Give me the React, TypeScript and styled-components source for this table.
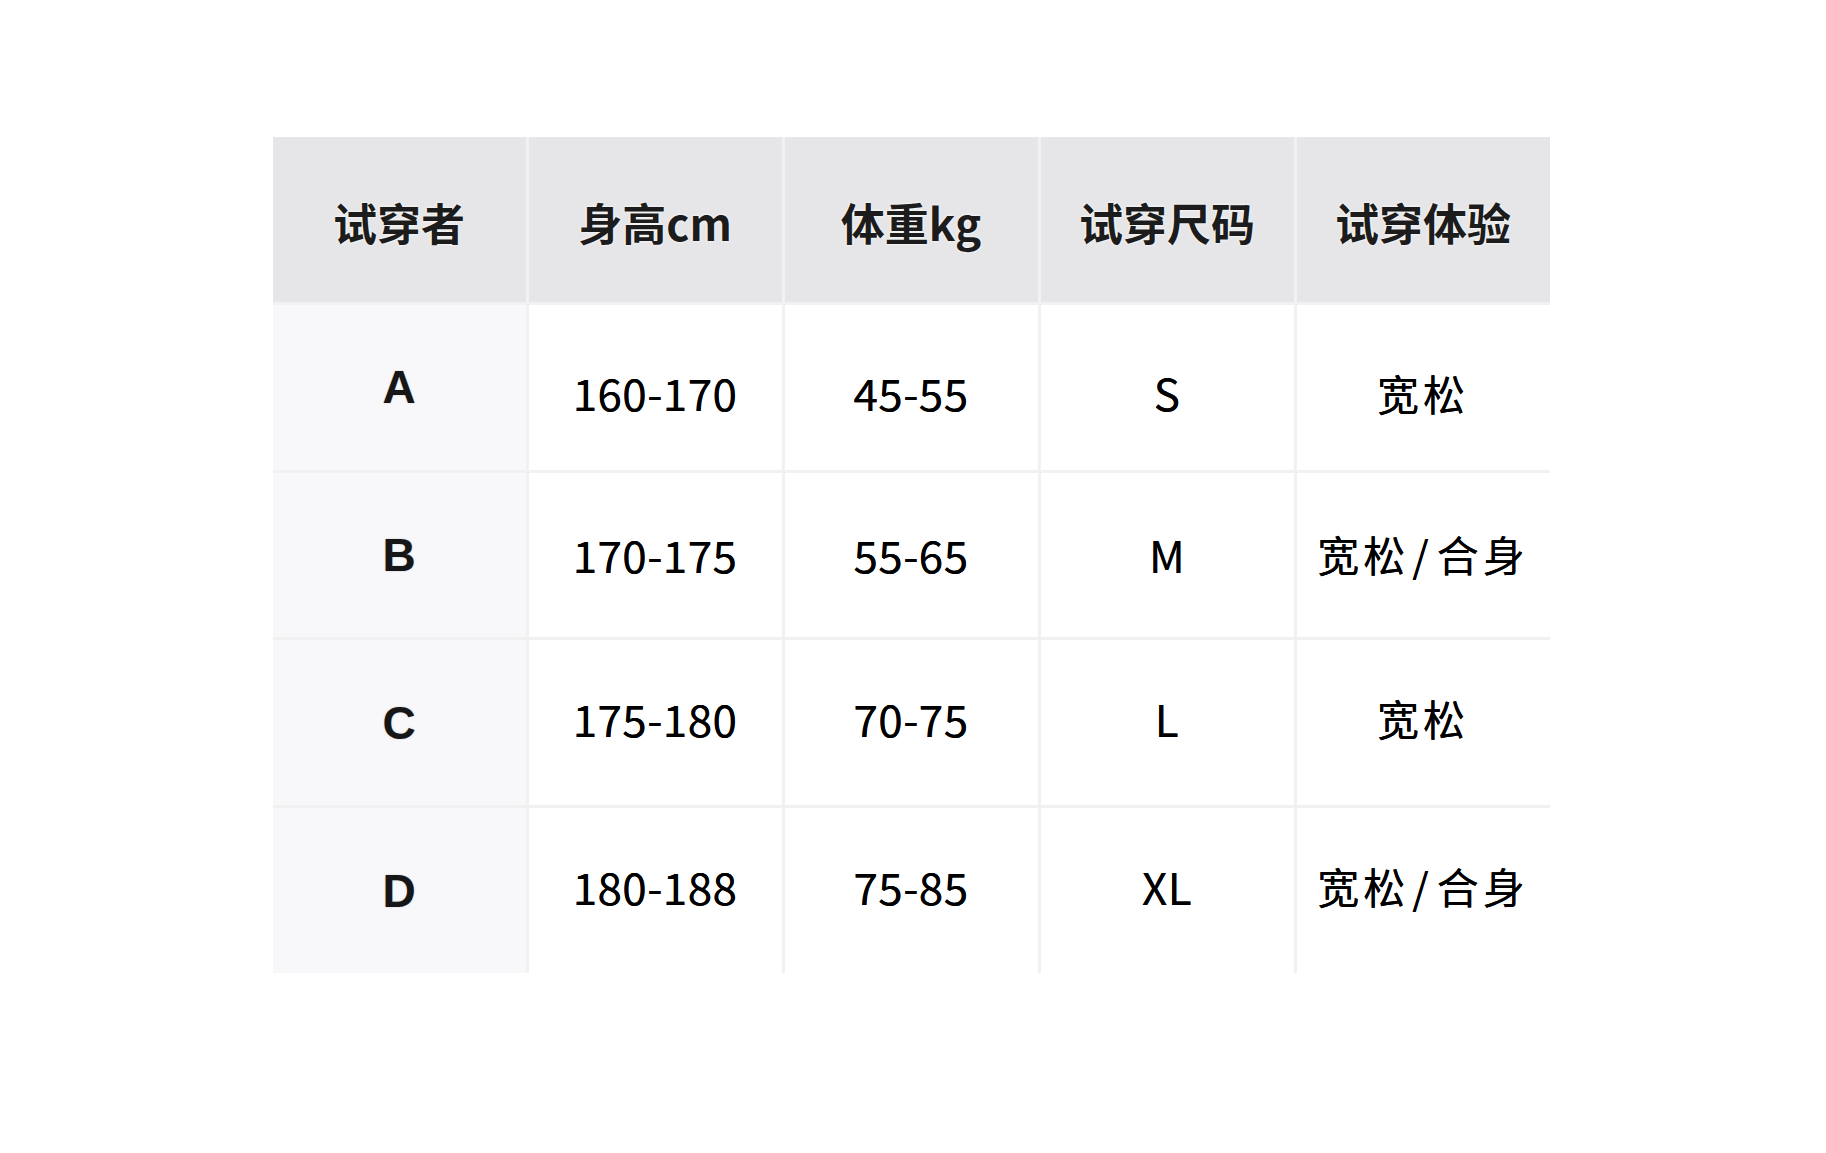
import React from "react";
import styled, { createGlobalStyle } from "styled-components";

const GlobalStyle = createGlobalStyle`
    html, body {
        margin: 0;
        padding: 0;
        background: #ffffff;
    }
    body {
        font-family: "Noto Sans CJK SC", "Noto Sans", sans-serif;
    }
`;

const Page = styled.div`
    width: 100%;
    min-height: 1153px;
    padding-top: 137px;
    box-sizing: border-box;
    display: flex;
    justify-content: center;
`;

const Table = styled.div`
    width: 1277px;
    height: 836px;
    margin-left: -4px;
    display: grid;
    grid-template-columns: repeat(5, 1fr);
    grid-template-rows: repeat(5, 1fr);
    gap: 3px;
    background: #f1f1f2;
`;

const HeadCell = styled.div`
    background: #e6e6e8;
    display: flex;
    align-items: center;
    justify-content: center;
    padding-top: 6px;
    font-family: "Noto Sans CJK SC", sans-serif;
    font-weight: 700;
    font-size: 44px;
    color: #1c1c1c;
    text-shadow: 0 0 3px #ffffff, 0 0 1px #ffffff;
`;

// $shift moves the text's centre down (+) or up (-) in px
const Cell = styled.div<{ $first?: boolean; $shift?: number }>`
    background: ${(p) => (p.$first ? "#f8f8fa" : "#ffffff")};
    display: flex;
    align-items: center;
    justify-content: center;
    padding-top: ${(p) => Math.max(0, (p.$shift || 0) * 2)}px;
    padding-bottom: ${(p) => Math.max(0, -(p.$shift || 0) * 2)}px;
    color: #111111;
`;

const Tester = styled.span`
    font-family: "Liberation Sans", Arial, sans-serif;
    font-weight: 700;
    font-size: 46px;
    color: #161616;
    text-shadow: 0 0 2px rgba(0, 0, 0, 0.2);
`;

const Value = styled.span<{ $cjk?: boolean }>`
    font-family: "Noto Sans CJK SC", sans-serif;
    font-weight: 400;
    font-size: ${(p) => (p.$cjk ? "42px" : "44px")};
    letter-spacing: ${(p) => (p.$cjk ? "4px" : "0.4px")};
    color: #000000;
    text-shadow: 0 0 0.6px rgba(0, 0, 0, 0.9);
`;

const Slash = styled.span`
    margin: 0 4px 0 3px;
`;

const headers = ["试穿者", "身高cm", "体重kg", "试穿尺码", "试穿体验"];

const rows = [
    { who: "A", height: "160-170", weight: "45-55", size: "S", fit: "宽松", shift: 5 },
    { who: "B", height: "170-175", weight: "55-65", size: "M", fit: "宽松/合身", shift: -1 },
    { who: "C", height: "175-180", weight: "70-75", size: "L", fit: "宽松", shift: -5 },
    { who: "D", height: "180-188", weight: "75-85", size: "XL", fit: "宽松/合身", shift: -5 },
];

function Fit({ text }: { text: string }) {
    const parts = text.split("/");
    return (
        <Value $cjk>
            {parts[0]}
            {parts.length > 1 && <Slash>/</Slash>}
            {parts[1]}
        </Value>
    );
}

function App() {
    return (
        <Page>
            <GlobalStyle />
            <Table>
                {headers.map((h) => (
                    <HeadCell key={h}>{h}</HeadCell>
                ))}
                {rows.map((r) => (
                    <React.Fragment key={r.who}>
                        <Cell $first>
                            <Tester>{r.who}</Tester>
                        </Cell>
                        <Cell $shift={r.shift}>
                            <Value>{r.height}</Value>
                        </Cell>
                        <Cell $shift={r.shift}>
                            <Value>{r.weight}</Value>
                        </Cell>
                        <Cell $shift={r.shift}>
                            <Value>{r.size}</Value>
                        </Cell>
                        <Cell $shift={r.shift}>
                            <Fit text={r.fit} />
                        </Cell>
                    </React.Fragment>
                ))}
            </Table>
        </Page>
    );
}

export default App;
